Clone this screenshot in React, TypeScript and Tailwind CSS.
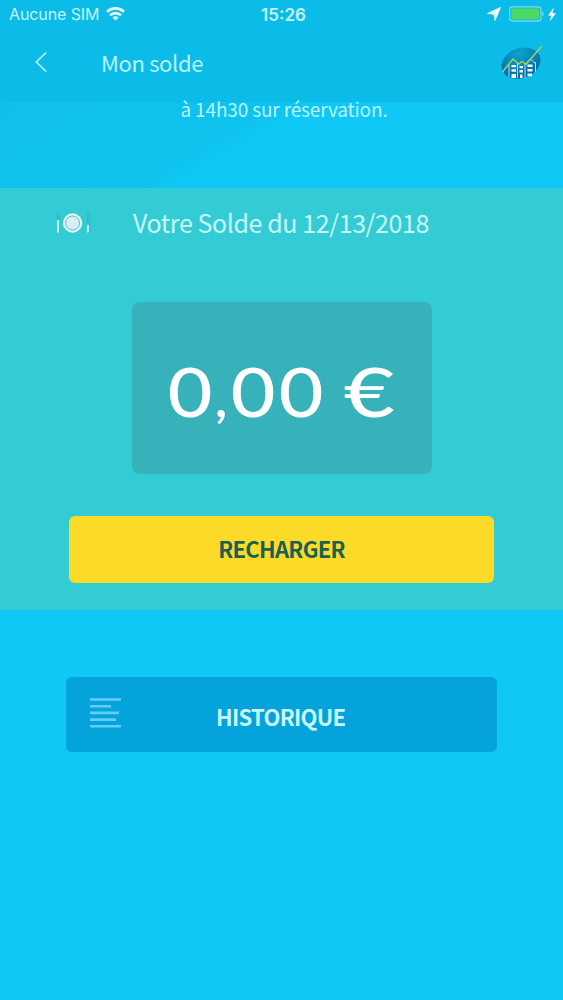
const WifiIcon = () => (
  <svg className="ml-[7px] h-[14px] w-[19px]" viewBox="0 0 19 14" fill="none" stroke="#e6fbff">
    <path d="M1 4.7C5.8.3 13.2.3 18 4.7" strokeWidth="2.9" />
    <path d="M4 8.2c3.2-2.9 7.8-2.9 11 0" strokeWidth="2.7" />
    <path d="M9.5 13.6 6.4 10.5c1.8-1.6 4.4-1.6 6.2 0Z" fill="#e6fbff" stroke="none" />
  </svg>
);

const BatteryIcon = () => (
  <svg className="ml-2 h-4 w-[36px]" viewBox="0 0 36 16">
    <rect x=".6" y=".9" width="31.4" height="14.2" rx="3" fill="none" stroke="#7fdcf5" strokeWidth="1.1" />
    <rect x="2.3" y="2.5" width="28" height="11" rx="1.6" fill="#4cd964" />
    <path d="M33.4 5.8c1.8.6 1.8 3.8 0 4.4Z" fill="#7fdcf5" />
  </svg>
);

const Logo = () => (
  <svg className="h-[36px] w-[42px]" viewBox="0 0 42 36">
    <defs>
      <radialGradient id="globe" cx="55%" cy="18%" r="80%">
        <stop offset="0" stopColor="#08a4cb" />
        <stop offset="1" stopColor="#0967a5" />
      </radialGradient>
    </defs>
    <ellipse cx="20" cy="18.2" rx="20" ry="15" fill="url(#globe)" transform="rotate(-20 20 18.2)" />
    <g fill="none" stroke="#b5dfee" strokeWidth="1">
      <path d="M8 20v12M16.5 18v15M24 18v15M34.5 17v10M24.5 19l5-5 5 4.5" />
    </g>
    <g fill="#f4fcff">
      <path d="M10.5 20h4.5v2.3h-4.5zM10.5 24.3h4.5v2.5h-4.5zM10.5 29h4.5v4h-4.5zM18.5 21h3.5v2.2h-3.5zM18.5 25h3.5v2.5h-3.5zM19 29.5h2.5v3.5h-2.5zM26.5 19.5h5v2.5h-5zM26.5 24h5v2.5h-5zM26.5 28.5h4.5v2.8h-4.5z" />
    </g>
    <path d="M1.5 27 12 14l6 5 3-2.5 4 2.8L40.5 1.5" fill="none" stroke="#a9d35a" strokeWidth="1.4" />
  </svg>
);

const PlateIcon = () => (
  <svg className="h-6 w-[36px]" viewBox="0 0 36 24">
    <g fill="none" stroke="#35b3bc" strokeWidth=".9">
      <path d="M0 1v4q0 2 2 2t2-2V1M2 1v8M31.6 13V3q0-2 2-2v21" />
    </g>
    <path d="M2 9v12.5M31.9 14v7.5" stroke="#e0f7fa" strokeWidth="1.9" />
    <circle cx="16.6" cy="12" r="9.7" fill="#dff5f8" />
    <circle cx="16.6" cy="12" r="7" fill="#d5eef5" stroke="#67bcc6" strokeWidth="1" />
  </svg>
);

const StatusBar = () => (
  <div className="grid h-7 grid-cols-3 items-center pr-[7px] pl-[9px] font-['Inter',sans-serif] text-[#c5f3fd]">
    <div className="flex items-center">
      <span className="text-[16px] leading-5 tracking-[-0.1px] whitespace-nowrap">Aucune SIM</span>
      <WifiIcon />
    </div>
    <span className="pt-0.5 pl-0.5 text-center text-[17px] leading-5 font-semibold">15:26</span>
    <div className="flex items-center justify-end">
      <svg className="h-[14px] w-[14px]" viewBox="0 0 14 14">
        <path d="M13.7.3 8 13.7 7 7.4.3 6.4Z" fill="#f4feff" stroke="#f4feff" strokeWidth=".6" />
      </svg>
      <BatteryIcon />
      <svg className="ml-[3px] h-[15px] w-2" viewBox="0 0 8 15">
        <path d="M5.8.5 0 8.4h3.2L1.8 14.5 8 6.2H4.6Z" fill="#f0fdff" />
      </svg>
    </div>
  </div>
);

const Amount = () => (
  <div className="mr-px flex items-baseline pt-1.5 font-['Lato',sans-serif] text-[67px] leading-none font-medium whitespace-pre text-white">
    <span className="w-12 scale-x-115 text-center">0</span>
    <span className="w-[15px] text-center text-[50px] font-bold">,</span>
    <span className="w-12 scale-x-115 text-center">0</span>
    <span className="w-12 scale-x-115 text-center">0</span>
    <span className="w-[17px]"> </span>
    <span className="flex w-[55px] justify-center">
      <span className="scale-x-132">€</span>
    </span>
  </div>
);

export default function App() {
  return (
    <div className="h-[1000px] w-full overflow-hidden bg-[#0fc8f6] font-['Noto_Sans_CJK_SC',sans-serif]">
      <header className="h-[102px] bg-[#0cbce8]">
        <StatusBar />
        <div className="flex h-[70px] items-center pr-[20px] pl-[35px]">
          <svg className="mb-0.5 h-5 w-3" viewBox="0 0 12 20">
            <path d="M11.2.5 1.2 10l10 9.5" fill="none" stroke="#c5f5fd" strokeWidth="1.5" />
          </svg>
          <h1 className="mb-0.5 ml-[54px] flex-1 text-[22px] tracking-[-0.35px] text-[#b9f3fd]">Mon solde</h1>
          <Logo />
        </div>
      </header>

      <div className="h-[86px] bg-[linear-gradient(150deg,#0fc0eb_0%,#0fc3ef_40%,#0fc8f6_45%)] pl-[5px] text-center text-[19px] leading-[14px] tracking-[-0.15px] text-[#b9f4fd]">
        à 14h30 sur réservation.
      </div>

      <section className="flex h-[422px] flex-col items-center bg-[#33ccd5]">
        <div className="flex h-[70px] w-full items-center pl-[56px]">
          <PlateIcon />
          <h2 className="mb-px ml-[41px] text-[25px] tracking-[-0.4px] text-[#c9f8fa]">
            Votre Solde du 12/13/2018
          </h2>
        </div>
        <div className="mt-11 flex h-[172px] w-[300px] items-center justify-center rounded-lg bg-[#38b2ba]">
          <Amount />
        </div>
        <button className="mt-[42px] h-[67px] w-[425px] rounded-md bg-[#fbda28] pb-0.5 text-[22px] font-bold tracking-[-0.7px] text-[#1a6153]">
          RECHARGER
        </button>
      </section>

      <button className="mx-auto mt-[67px] flex h-[75px] w-[431px] items-center rounded-md bg-[#04a3dc] pl-6">
        <svg className="mb-1 h-[30px] w-[31px]" viewBox="0 0 31 30" stroke="#65cdf4" strokeWidth="2.6">
          <path d="M0 1.5h31M0 8.2h21M0 14.9h29M0 21.6h26M0 28.3h31" />
        </svg>
        <span className="ml-[95px] pt-1 text-[22px] font-bold tracking-[-0.7px] text-[#c9f7ff]">HISTORIQUE</span>
      </button>
    </div>
  );
}
